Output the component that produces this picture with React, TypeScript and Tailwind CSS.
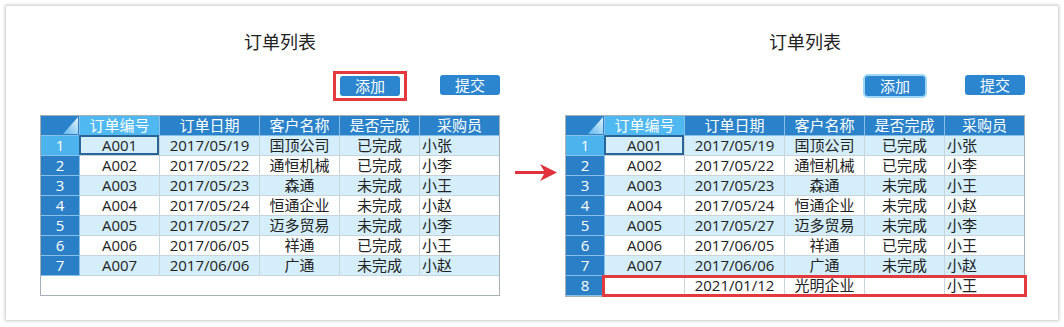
import React from 'react';

const cols = ['w-[39px]', 'w-[80px]', 'w-[100px]', 'w-[80px]', 'w-[80px]', 'w-[79px]'];
const heads = ['订单编号', '订单日期', '客户名称', '是否完成', '采购员'];

const rows = [
  ['A001', '2017/05/19', '国顶公司', '已完成', '小张'],
  ['A002', '2017/05/22', '通恒机械', '已完成', '小李'],
  ['A003', '2017/05/23', '森通', '未完成', '小王'],
  ['A004', '2017/05/24', '恒通企业', '未完成', '小赵'],
  ['A005', '2017/05/27', '迈多贸易', '未完成', '小李'],
  ['A006', '2017/06/05', '祥通', '已完成', '小王'],
  ['A007', '2017/06/06', '广通', '未完成', '小赵'],
];

const added = ['', '2021/01/12', '光明企业', '', '小王'];

function Corner() {
  return (
    <div className={`${cols[0]} h-[20px] bg-[#2a83ca] border-r border-b border-[#86bfe8] flex items-end justify-end pr-[1px] pb-[1px]`}>
      <svg width="15" height="17" viewBox="0 0 15 17">
        <defs>
          <linearGradient id="cg" x1="0" y1="1" x2="1" y2="0">
            <stop offset="0" stopColor="#5fb6ec" />
            <stop offset="1" stopColor="#e4f4fd" />
          </linearGradient>
        </defs>
        <polygon points="0,17 15,0 15,17" fill="url(#cg)" />
      </svg>
    </div>
  );
}

function DataRow({ n, data, index, selected, mark }: { n: number; data: string[]; index: number; selected?: boolean; mark?: boolean }) {
  const bg = index % 2 === 0 ? 'bg-[#d5eefb]' : 'bg-white';
  return (
    <div className="relative flex h-[20px]">
      <div className={`${cols[0]} h-[20px] leading-[19px] text-center text-white border-r border-b border-[#86bfe8] ${selected ? 'bg-[#4db3ec]' : 'bg-[#2b7fc6]'}`}>
        {n}
      </div>
      {data.map((v, i) => (
        <div
          key={i}
          className={`relative ${cols[i + 1]} h-[20px] leading-[19px] border-b border-[#c8d5de] text-[#222] whitespace-nowrap ${bg} ${i < 4 ? 'border-r text-center' : 'pl-[2px] text-left'}`}
        >
          {v}
          {selected && i === 0 && (
            <span className="absolute -top-[1px] -bottom-[0px] -left-[1px] -right-[0px] border-2 border-[#2a6597]" />
          )}
        </div>
      ))}
      {mark && <span className="absolute left-[36px] -right-[3px] -top-[1px] -bottom-[1px] border-[3px] border-[#e23a3f]" />}
    </div>
  );
}

function Panel({ after }: { after?: boolean }) {
  return (
    <div className="flex flex-col w-[460px]">
      <div className="h-[24px] leading-[24px] pl-[20px] text-center text-[18px] text-[#222]">订单列表</div>
      <div className="flex justify-end gap-[40px] mt-[21px] h-[20px]">
        <div className="relative">
          <button
            className={`w-[60px] h-[20px] rounded-[3px] bg-[#2b86cf] text-white text-[15px] leading-[20px] ${after ? 'ring-2 ring-[#9fd7f7]' : ''}`}
          >
            添加
          </button>
          {!after && <span className="absolute -left-[7px] -right-[7px] -top-[4px] -bottom-[6px] border-[3px] border-[#e23a3f]" />}
        </div>
        <button className="w-[60px] h-[20px] rounded-[3px] bg-[#2b86cf] text-white text-[15px] leading-[20px]">提交</button>
      </div>
      <div className="mt-[20px] w-[460px] border border-[#a8b0b6] bg-white">
        <div className="flex h-[20px]">
          <Corner />
          {heads.map((h, i) => (
            <div
              key={h}
              className={`${cols[i + 1]} h-[20px] leading-[19px] text-center text-white border-b border-[#86bfe8] ${i < 4 ? 'border-r' : ''} ${i === 0 ? 'bg-[#50b8f0]' : 'bg-[#2a83ca]'}`}
            >
              {h}
            </div>
          ))}
        </div>
        {rows.map((r, i) => (
          <DataRow key={i} n={i + 1} data={r} index={i} selected={i === 0} />
        ))}
        {after ? <DataRow n={8} data={added} index={1} mark /> : <div className="h-[19px] bg-white" />}
      </div>
    </div>
  );
}

export default function App() {
  return (
    <div className="w-[1064px] h-[327px] bg-white pt-[6px] pl-[6px]" style={{ fontFamily: '"Open Sans", "Noto Sans CJK SC", sans-serif' }}>
      <div className="w-[1052px] h-[314px] bg-white shadow-[0_0_3px_1px_rgba(0,0,0,0.22)] flex pl-[34px] pt-[24px] text-[15px]">
        <Panel />
        <div className="w-[65px]">
          <svg className="ml-[15px] mt-[134px]" width="42" height="17" viewBox="0 0 42 17">
            <rect x="0" y="7" width="32" height="3" fill="#e0313c" />
            <polygon points="25,0 42,8.5 25,17 30,8.5" fill="#e0313c" />
          </svg>
        </div>
        <Panel after />
      </div>
    </div>
  );
}
